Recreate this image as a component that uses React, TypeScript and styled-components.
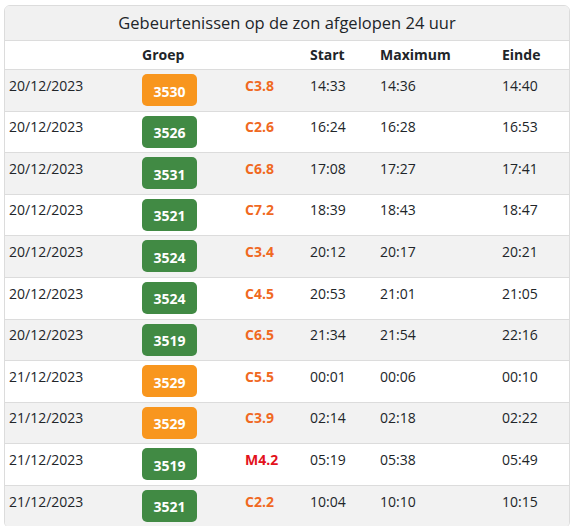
import styled, { createGlobalStyle } from 'styled-components';

const GlobalStyle = createGlobalStyle`
  html, body {
    margin: 0;
    padding: 0;
    background: #ffffff;
  }
  body {
    font-family: 'Open Sans', 'Liberation Sans', sans-serif;
    color: #212529;
  }
`;

const Page = styled.div`
  padding: 5px 4px 0 4px;
`;

const Card = styled.div`
  width: 566px;
  box-sizing: border-box;
  border: 1px solid #dcdcdc;
  border-radius: 6px;
  overflow: hidden;
  background: #ffffff;
`;

const CardHeader = styled.div`
  background: #f1f1f1;
  border-bottom: 1px solid #dcdcdc;
  text-align: center;
  font-size: 16.5px;
  line-height: 24px;
  padding: 5px 0 5px;
  color: #212529;
`;

const Table = styled.table`
  width: 100%;
  border-collapse: collapse;
  table-layout: fixed;
  font-size: 14px;
`;

const Th = styled.th`
  text-align: left;
  font-weight: 700;
  line-height: 20px;
  padding: 4px 5px 4px 4px;
  border-bottom: 1px solid #dcdcdc;
`;

const Row = styled.tr<{ $striped: boolean }>`
  background: ${(p) => (p.$striped ? '#f2f2f2' : '#ffffff')};
  border-top: 1px solid #dcdcdc;
`;

const Td = styled.td`
  vertical-align: top;
  line-height: 20px;
  padding: 5.6px 5px 0 4px;
`;

const BadgeCell = styled.td`
  vertical-align: top;
  padding: 4px 5px 4.6px 4px;
`;

const Badge = styled.div<{ $tone: 'orange' | 'green' }>`
  width: 55px;
  height: 32px;
  border-radius: 5px;
  background: ${(p) => (p.$tone === 'orange' ? '#f8961e' : '#418a44')};
  color: #ffffff;
  font-weight: 700;
  font-size: 14px;
  display: flex;
  align-items: center;
  justify-content: center;
  padding-top: 2px;
  box-sizing: border-box;
`;

const ClassText = styled.span<{ $major: boolean }>`
  font-weight: 700;
  color: ${(p) => (p.$major ? '#e3121b' : '#f0691f')};
`;

type Flare = {
  date: string;
  group: string;
  tone: 'orange' | 'green';
  cls: string;
  start: string;
  max: string;
  end: string;
};

const flares: Flare[] = [
  { date: '20/12/2023', group: '3530', tone: 'orange', cls: 'C3.8', start: '14:33', max: '14:36', end: '14:40' },
  { date: '20/12/2023', group: '3526', tone: 'green', cls: 'C2.6', start: '16:24', max: '16:28', end: '16:53' },
  { date: '20/12/2023', group: '3531', tone: 'green', cls: 'C6.8', start: '17:08', max: '17:27', end: '17:41' },
  { date: '20/12/2023', group: '3521', tone: 'green', cls: 'C7.2', start: '18:39', max: '18:43', end: '18:47' },
  { date: '20/12/2023', group: '3524', tone: 'green', cls: 'C3.4', start: '20:12', max: '20:17', end: '20:21' },
  { date: '20/12/2023', group: '3524', tone: 'green', cls: 'C4.5', start: '20:53', max: '21:01', end: '21:05' },
  { date: '20/12/2023', group: '3519', tone: 'green', cls: 'C6.5', start: '21:34', max: '21:54', end: '22:16' },
  { date: '21/12/2023', group: '3529', tone: 'orange', cls: 'C5.5', start: '00:01', max: '00:06', end: '00:10' },
  { date: '21/12/2023', group: '3529', tone: 'orange', cls: 'C3.9', start: '02:14', max: '02:18', end: '02:22' },
  { date: '21/12/2023', group: '3519', tone: 'green', cls: 'M4.2', start: '05:19', max: '05:38', end: '05:49' },
  { date: '21/12/2023', group: '3521', tone: 'green', cls: 'C2.2', start: '10:04', max: '10:10', end: '10:15' },
];

const App = () => {
  return (
    <Page>
      <GlobalStyle />
      <Card>
        <CardHeader>Gebeurtenissen op de zon afgelopen 24 uur</CardHeader>
        <Table>
          <colgroup>
            <col style={{ width: 133 }} />
            <col style={{ width: 103 }} />
            <col style={{ width: 65 }} />
            <col style={{ width: 70 }} />
            <col style={{ width: 122 }} />
            <col />
          </colgroup>
          <thead>
            <tr>
              <Th></Th>
              <Th>Groep</Th>
              <Th></Th>
              <Th>Start</Th>
              <Th>Maximum</Th>
              <Th>Einde</Th>
            </tr>
          </thead>
          <tbody>
            {flares.map((f, i) => (
              <Row key={i} $striped={i % 2 === 0}>
                <Td>{f.date}</Td>
                <BadgeCell>
                  <Badge $tone={f.tone}>{f.group}</Badge>
                </BadgeCell>
                <Td>
                  <ClassText $major={f.cls.startsWith('M')}>{f.cls}</ClassText>
                </Td>
                <Td>{f.start}</Td>
                <Td>{f.max}</Td>
                <Td>{f.end}</Td>
              </Row>
            ))}
          </tbody>
        </Table>
      </Card>
    </Page>
  );
};

export default App;
